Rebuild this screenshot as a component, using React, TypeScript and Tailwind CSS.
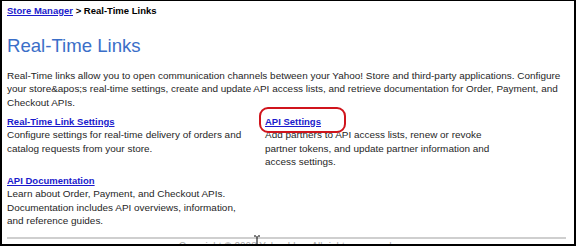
import React from "react";

export default function App() {
  const font = { fontFamily: '"Liberation Sans", Arial, sans-serif' };
  return (
    <div
      className="relative w-[576px] h-[246px] overflow-hidden bg-white border-t border-l-2 border-r-2 border-b-2 border-black text-[9.95px] leading-[13.5px] text-[#262626]"
      style={font}
    >
      <div className="pl-[5px] pr-2">
        <div className="pt-[3px] font-bold text-[9.5px] leading-[13.5px]">
          <a className="text-[#1a1acc] underline">Store Manager</a>
          <span className="text-black"> &gt; Real-Time Links</span>
        </div>
        <h1 className="mt-[16px] text-[18.6px] leading-[24px] text-[#3a6ec8]">Real-Time Links</h1>
        <p className="mt-[11px] whitespace-nowrap">
          Real-Time links allow you to open communication channels between your Yahoo! Store and third-party applications. Configure
          <br />
          your store&amp;apos;s real-time settings, create and update API access lists, and retrieve documentation for Order, Payment, and
          <br />
          Checkout APIs.
        </p>
        <div className="mt-[5.5px] grid grid-cols-[258px_1fr]">
          <div>
            <a className="font-bold text-[9.5px] text-[#1a1acc] underline">Real-Time Link Settings</a>
            <div className="whitespace-nowrap">
              Configure settings for real-time delivery of orders and
              <br />
              catalog requests from your store.
            </div>
          </div>
          <div className="relative">
            <a className="font-bold text-[9.5px] text-[#1a1acc] underline">API Settings</a>
            <div className="whitespace-nowrap">
              Add partners to API access lists, renew or revoke
              <br />
              partner tokens, and update partner information and
              <br />
              access settings.
            </div>
            <div className="absolute left-[-6px] top-[-8px] w-[87px] h-[26px] border-2 border-[#d0141c] rounded-[9px]" />
          </div>
        </div>
        <div className="mt-[5px]">
          <a className="font-bold text-[9.5px] text-[#1a1acc] underline">API Documentation</a>
          <div className="whitespace-nowrap">
            Learn about Order, Payment, and Checkout APIs.
            <br />
            Documentation includes API overviews, information,
            <br />
            and reference guides.
          </div>
        </div>
        <div className="mt-[9px] border-t-2 border-[#cfcfcf]" />
        <div className="pt-[1px] text-center text-[10px] text-[#aaa]">Copyright © 2008 Yahoo! Inc. All rights reserved.</div>
      </div>
      <svg className="absolute left-[250px] top-[234px]" width="10" height="14" viewBox="0 0 10 14">
        <path d="M2 1h2M6 1h2M5 1v12M2 13h2M6 13h2" stroke="#000" strokeWidth="1" fill="none" />
      </svg>
    </div>
  );
}
